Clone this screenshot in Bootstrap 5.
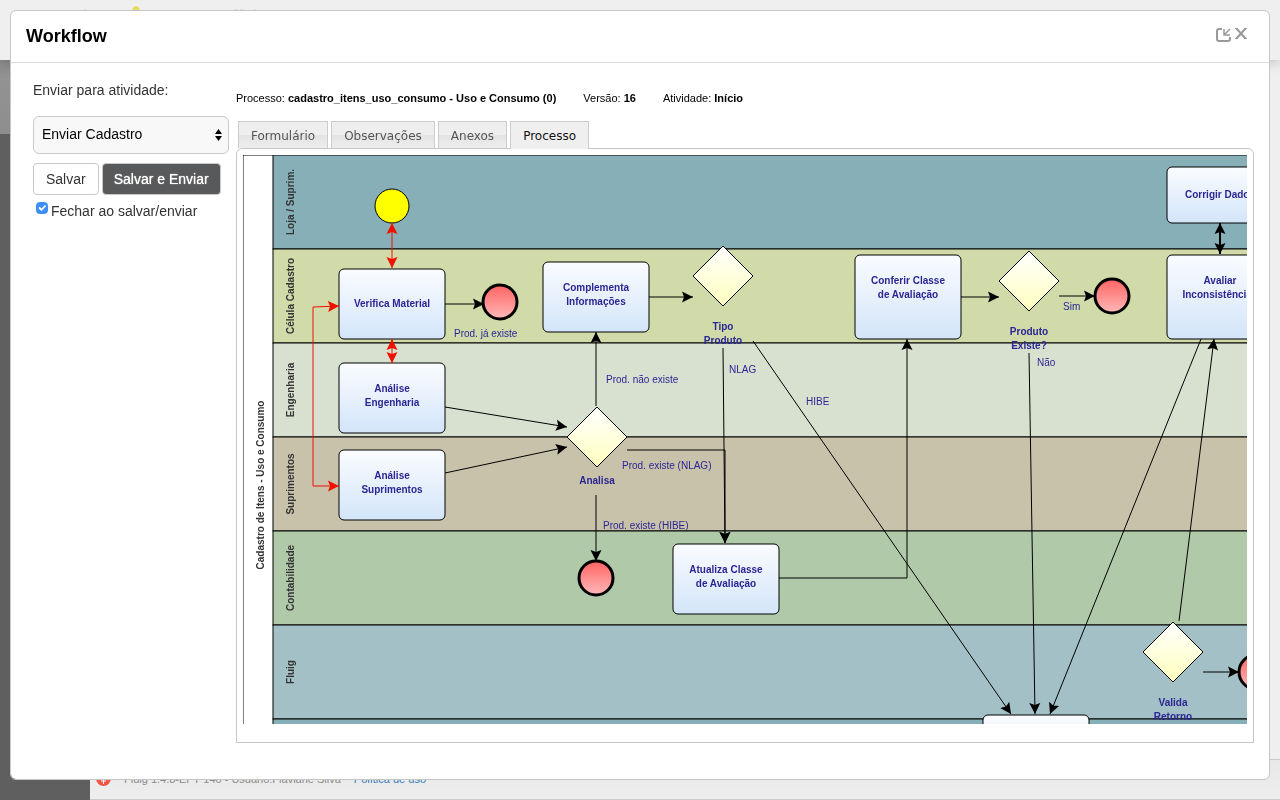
<!DOCTYPE html>
<html lang="pt-BR">
<head>
<meta charset="utf-8">
<meta name="viewport" content="width=device-width, initial-scale=1">
<title>Workflow</title>
<link href="https://cdn.jsdelivr.net/npm/bootstrap@5.3.0/dist/css/bootstrap.min.css" rel="stylesheet">
<style>
  body { font-family: "Liberation Sans", Arial, sans-serif; font-size: 14px; line-height: 20px; color: #333; background: #efefef; }

  /* Page behind the dialog */
  .page-top { height: 60px; background: #efefef; box-shadow: 0 2px 12px rgba(0,0,0,.2); z-index: 1; }
  .page-top svg { display: block; margin-left: 80px; }
  .page-side { width: 90px; background: #5f5f5f; box-shadow: 0 0 10px rgba(0,0,0,.35); }
  .side-head { height: 74px; background: linear-gradient(#8c8c8c, #929292 20px, #8e8e8e); }
  .page-foot { height: 41px; padding: 0 0 2px 6px; border-top: 1px solid #ccc; border-bottom: 1px solid #ccc; background: linear-gradient(#e8e8e8, #eee); font-size: 11px; color: #8a8a8a; gap: 13px; }
  .page-foot a { color: #337ab7; text-decoration: none; }

  /* Dialog */
  .workflow { padding: 10px 10px 20px; }
  .workflow .modal-content { border: 1px solid #c6c6c6; border-radius: 6px; color: inherit; }
  .workflow .modal-header { height: 52px; padding: 0 22px 2px 15px; border-bottom: 1px solid #ddd; }
  .workflow .modal-title { font-size: 18px; font-weight: 700; color: #000; line-height: 24px; }
  .workflow .modal-body { padding: 17px 15px 36px 22px; gap: 7px; }
  .tool { border: 0; background: none; padding: 0; line-height: 0; }
  .tools { gap: 4px; padding-bottom: 2px; }

  .actions { width: 196px; }
  .actions > label { margin-bottom: 16px; }
  .activity { position: relative; }
  .activity select { height: 38px; padding: 0 24px 2px 8px; border-color: #c9c9c9; border-radius: 6px; background: #f8f8f8; color: #000; font-size: 14px; }
  .activity svg { position: absolute; right: 7px; top: 13px; pointer-events: none; }
  .send-row { gap: 3px; margin-top: 9px; }
  .send-row .btn { height: 32px; padding: 0 12px; border: 1px solid #c9c9c9; border-radius: 4px; font-size: 14px; line-height: 20px; color: #333; background: #fff; }
  .send-row .btn-send { padding: 0 11px; background: #58595b; color: #fff; text-shadow: 0 0 1px #fff; }
  .close-row { margin-top: 6px; padding-left: 3px; gap: 3px; }
  .close-row input { width: 12px; height: 12px; margin: 1px 0 0; border-radius: 3px; }
  .close-row input:checked { background-color: #3b8ff5; border-color: #3b8ff5; background-size: 12px 12px; }

  .process-info { gap: 27px; padding-top: 10px; font-size: 11px; line-height: 16px; color: #000; }
  .process-tabs { margin: 15px 0 0 2px; gap: 3px; border: 0; }
  .process-tabs .nav-link { height: 27px; margin: 0; padding: 0 12px; border: 1px solid #ccc; border-bottom-width: 0; border-radius: 0; font-family: "DejaVu Sans", sans-serif; font-size: 12px; line-height: 28px; color: #555; background: linear-gradient(#eee 50%, #e3e3e3 50%, #eee); }
  .process-tabs .nav-link.active { color: #111; background: #efefef; border-color: #ccc; margin-bottom: -1px; height: 28px; position: relative; }
  .process-panel { border: 1px solid #c6c6c6; border-radius: 6px 6px 0 0; padding: 6px 6px 18px; min-height: 0; }
  .canvas { overflow: hidden; min-height: 0; }

  /* Diagram */
  .canvas svg { display: block; font-size: 10px; }
  .lanes rect { stroke: #000; }
  .lane-name { font-weight: 700; fill: #333; text-anchor: middle; }
  .task { fill: url(#taskFill); stroke: #000; }
  .gateway { fill: url(#gateFill); stroke: #000; shape-rendering: crispEdges; }
  .finish { fill: url(#endFill); stroke: #000; stroke-width: 3px; }
  .flow { fill: none; stroke: #000; marker-end: url(#tip); }
  .flow-red { fill: none; stroke: #ee1100; marker-start: url(#tipRed); marker-end: url(#tipRed); }
  .step-name { font-weight: 700; fill: #2b2693; text-anchor: middle; }
  .flow-name { fill: #2b2693; }
</style>
</head>
<body class="vh-100 overflow-hidden">

<div class="position-fixed top-0 start-0 w-100 h-100 d-flex flex-column" aria-hidden="true">
  <header class="page-top flex-shrink-0 position-relative">
    <svg width="190" height="20"><path d="M52 12c0-4 2-6 4-6s4 2 4 6z" fill="#e6dc62"/><path d="M4 10h3M154 10h4M160 10h4M174 10h2" stroke="#ccc"/></svg>
  </header>
  <div class="d-flex flex-grow-1">
    <aside class="page-side flex-shrink-0"><div class="side-head"></div></aside>
    <div class="flex-grow-1 d-flex flex-column justify-content-end">
      <footer class="page-foot d-flex align-items-center">
        <svg width="15" height="15"><circle cx="7.500" cy="7.500" r="7.500" fill="#ee5544"/><path d="M5 10h5M7.500 8v5" stroke="#fff"/></svg>
        <span>Fluig 1.4.8-EFY 140 - Usuário:Flaviane Silva</span>
        <a href="#" tabindex="-1">Política de uso</a>
      </footer>
    </div>
  </div>
</div>

<main class="workflow vh-100 position-relative z-1" role="dialog" aria-labelledby="title">
  <div class="modal-content h-100 bg-white">
    <div class="modal-header">
      <h1 class="modal-title" id="title">Workflow</h1>
      <div class="tools d-flex align-items-start">
        <button type="button" class="tool" aria-label="Restaurar">
          <svg width="15" height="14" fill="none" stroke="#999" stroke-width="2"><path d="M6 1H3Q1 1 1 3v8q0 2 2 2h9q2 0 2-2V9"/><path d="M14 1L8.500 6.500M8 1v6h6" stroke-width="1.500"/></svg>
        </button>
        <button type="button" class="tool" aria-label="Fechar">
          <svg width="12" height="12" fill="none" stroke="#999" stroke-width="2"><path d="M1.500.500l9 10M10.500.500l-9 10"/><path d="M0 .500h3M9 .500h3M0 10.500h3M9 10.500h3" stroke-width="1"/></svg>
        </button>
      </div>
    </div>

    <div class="modal-body d-flex overflow-hidden">
      <form class="actions flex-shrink-0 d-flex flex-column">
        <label for="activity">Enviar para atividade:</label>
        <div class="activity">
          <select class="form-select" id="activity"><option>Enviar Cadastro</option></select>
          <svg width="7" height="12"><path d="M0 5L3.500 0L7 5zM0 7l3.500 5L7 7z"/></svg>
        </div>
        <div class="send-row d-flex">
          <button type="button" class="btn">Salvar</button>
          <button type="button" class="btn btn-send">Salvar e Enviar</button>
        </div>
        <div class="close-row d-flex">
          <input class="form-check-input" type="checkbox" id="closeAfter" checked>
          <label for="closeAfter">Fechar ao salvar/enviar</label>
        </div>
      </form>

      <section class="flex-grow-1 d-flex flex-column overflow-hidden">
        <div class="process-info d-flex">
          <span>Processo: <b>cadastro_itens_uso_consumo - Uso e Consumo (0)</b></span>
          <span>Versão: <b>16</b></span>
          <span>Atividade: <b>Início</b></span>
        </div>
        <div class="nav nav-tabs process-tabs" role="tablist">
          <button type="button" class="nav-link" role="tab">Formulário</button>
          <button type="button" class="nav-link" role="tab">Observações</button>
          <button type="button" class="nav-link" role="tab">Anexos</button>
          <button type="button" class="nav-link active" role="tab" aria-selected="true">Processo</button>
        </div>
        <div class="process-panel flex-grow-1 d-flex flex-column">
          <div class="canvas flex-grow-1">
            <svg width="1600" height="680" role="img" aria-label="Cadastro de Itens - Uso e Consumo">
              <defs>
                <linearGradient id="taskFill" x2="0" y2="1"><stop stop-color="#fafcff"/><stop offset="1" stop-color="#d3e5f9"/></linearGradient>
                <linearGradient id="gateFill" x2="0" y2="1"><stop stop-color="#fff"/><stop offset="1" stop-color="#ffffbe"/></linearGradient>
                <linearGradient id="endFill" x2="0" y2="1"><stop stop-color="#ff6363"/><stop offset="1" stop-color="#ffb9b9"/></linearGradient>
                <marker id="tip" markerUnits="userSpaceOnUse" markerWidth="12" markerHeight="12" refX="11" refY="6" orient="auto-start-reverse"><path d="M0 .500L11 6L0 11.500L2 6z"/></marker>
                <marker id="tipRed" markerUnits="userSpaceOnUse" markerWidth="12" markerHeight="12" refX="11" refY="6" orient="auto-start-reverse"><path d="M0 .500L11 6L0 11.500L2 6z" fill="#ee1100"/></marker>
              </defs>

              <g class="lanes">
                <rect width="1590" height="658" fill="#fff"/>
                <rect x="30" width="1560" height="94" fill="#86afb7"/>
                <rect x="30" y="94" width="1560" height="94" fill="#d1dbaa"/>
                <rect x="30" y="188" width="1560" height="94" fill="#d8e1d0"/>
                <rect x="30" y="282" width="1560" height="94" fill="#c9c2aa"/>
                <rect x="30" y="376" width="1560" height="94" fill="#b0c9a9"/>
                <rect x="30" y="470" width="1560" height="94" fill="#a2c0c6"/>
                <rect x="30" y="564" width="1560" height="94" fill="#86afb7"/>
              </g>
              <g class="lane-name">
                <text transform="translate(21 330) rotate(-90)">Cadastro de Itens - Uso e Consumo</text>
                <text transform="translate(51 47) rotate(-90)">Loja / Suprim.</text>
                <text transform="translate(51 141) rotate(-90)">Célula Cadastro</text>
                <text transform="translate(51 235) rotate(-90)">Engenharia</text>
                <text transform="translate(51 329) rotate(-90)">Suprimentos</text>
                <text transform="translate(51 423) rotate(-90)">Contabilidade</text>
                <text transform="translate(51 517) rotate(-90)">Fluig</text>
              </g>

              <circle cx="149" cy="51" r="17" fill="#ff0" stroke="#000"/>
              <g class="task">
                <rect x="96" y="114" width="106" height="70" rx="5"/>
                <rect x="96" y="208" width="106" height="70" rx="5"/>
                <rect x="96" y="295" width="106" height="70" rx="5"/>
                <rect x="300" y="107" width="106" height="70" rx="5"/>
                <rect x="430" y="389" width="106" height="70" rx="5"/>
                <rect x="612" y="100" width="106" height="84" rx="5"/>
                <rect x="924" y="100" width="106" height="84" rx="5"/>
                <rect x="924" y="12" width="106" height="56" rx="5"/>
                <rect x="740" y="560" width="106" height="70" rx="5"/>
              </g>
              <g class="gateway">
                <path d="M480 91l30 30-30 30-30-30z"/>
                <path d="M354 252l30 30-30 30-30-30z"/>
                <path d="M786 96l30 30-30 30-30-30z"/>
                <path d="M930 467l30 30-30 30-30-30z"/>
              </g>
              <g class="finish">
                <circle cx="257" cy="147" r="17"/>
                <circle cx="353" cy="423" r="17"/>
                <circle cx="869" cy="141" r="17"/>
                <circle cx="1013" cy="517" r="17"/>
              </g>

              <path class="flow-red" d="M149 68V113"/>
              <path class="flow-red" d="M149 184V208"/>
              <path class="flow-red" d="M96 151L70 152V331H96"/>
              <path class="flow" d="M202 149H241"/>
              <path class="flow" d="M406 142H450"/>
              <path class="flow" d="M353 251V177"/>
              <path class="flow" d="M202 252L324 272"/>
              <path class="flow" d="M202 318L324 292"/>
              <path class="flow" d="M353 340V406"/>
              <path class="flow" d="M384 295H482V388"/>
              <path class="flow" d="M480 193L482 388"/>
              <path class="flow" d="M510 186L768 559"/>
              <path class="flow" d="M536 423H664V184"/>
              <path class="flow" d="M718 142H756"/>
              <path class="flow" d="M816 141H852"/>
              <path class="flow" d="M786 198L792 559"/>
              <path class="flow" d="M958 184L807 559"/>
              <path class="flow" d="M936 466L971 184"/>
              <path class="flow" d="M960 517H996"/>
              <path class="flow" d="M977 68V99" marker-start="url(#tip)" stroke-width="2"/>

              <g class="step-name">
                <text x="149" y="152">Verifica Material</text>
                <text x="149" y="237">Análise</text><text x="149" y="251">Engenharia</text>
                <text x="149" y="324">Análise</text><text x="149" y="338">Suprimentos</text>
                <text x="353" y="136">Complementa</text><text x="353" y="150">Informações</text>
                <text x="483" y="418">Atualiza Classe</text><text x="483" y="432">de Avaliação</text>
                <text x="665" y="129">Conferir Classe</text><text x="665" y="143">de Avaliação</text>
                <text x="977" y="129">Avaliar</text><text x="977" y="143">Inconsistências</text>
                <text x="977" y="43">Corrigir Dados</text>
                <text x="480" y="175">Tipo</text><text x="480" y="189">Produto</text>
                <text x="354" y="329">Analisa</text>
                <text x="786" y="180">Produto</text><text x="786" y="194">Existe?</text>
                <text x="930" y="551">Valida</text><text x="930" y="565">Retorno</text>
              </g>
              <g class="flow-name">
                <text x="211" y="182">Prod. já existe</text>
                <text x="363" y="228">Prod. não existe</text>
                <text x="486" y="218">NLAG</text>
                <text x="563" y="250">HIBE</text>
                <text x="379" y="314">Prod. existe (NLAG)</text>
                <text x="360" y="374">Prod. existe (HIBE)</text>
                <text x="820" y="155">Sim</text>
                <text x="794" y="211">Não</text>
              </g>
            </svg>
          </div>
        </div>
      </section>
    </div>
  </div>
</main>

<script src="https://cdn.jsdelivr.net/npm/bootstrap@5.3.0/dist/js/bootstrap.bundle.min.js"></script>
</body>
</html>
